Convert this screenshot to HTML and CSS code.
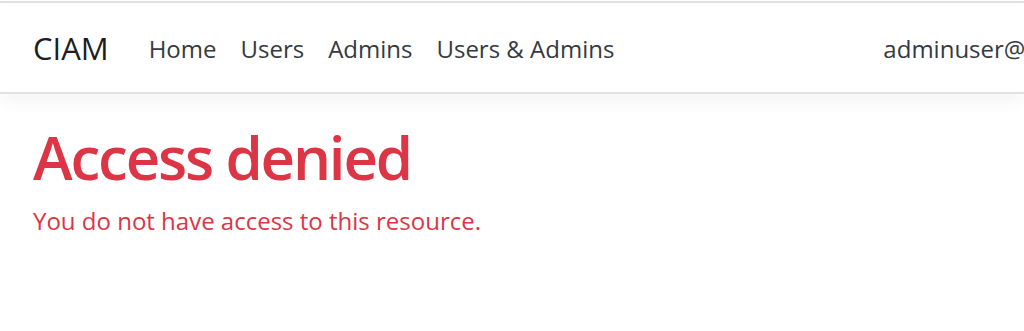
FILE: index.html
```html
<!DOCTYPE html>
<html lang="en">
<head>
    <meta charset="UTF-8">
    <meta name="viewport" content="width=device-width, initial-scale=1.0">
    <title>Access denied - CIAM</title>
    <link rel="stylesheet" href="styles.css">
</head>
<body>
    <header class="topbar">
        <nav class="navbar">
            <div class="navbar-inner">
                <a class="brand" href="#">CIAM</a>
                <ul class="nav-links">
                    <li><a href="#">Home</a></li>
                    <li><a href="#">Users</a></li>
                    <li><a href="#">Admins</a></li>
                    <li><a href="#">Users &amp; Admins</a></li>
                </ul>
                <ul class="nav-links nav-user">
                    <li><a href="#">adminuser@example.com</a></li>
                    <li><a href="#">Logout</a></li>
                </ul>
            </div>
        </nav>
    </header>

    <main class="container">
        <h1 class="text-danger">Access denied</h1>
        <p class="text-danger">You do not have access to this resource.</p>
    </main>
</body>
</html>
```

FILE: styles.css
```css
html, body {
    margin: 0;
    padding: 0;
}
body {
    font-family: "Open Sans", "Noto Sans", Arial, sans-serif;
    font-size: 24px;
    line-height: 1.5;
    color: #212529;
    background-color: #fff;
    overflow-x: hidden;
}
a {
    text-decoration: none;
}
.topbar {
    border-top: 2px solid #e2e2e2;
    margin-top: 1px;
}
.navbar {
    background-color: #fff;
    border-bottom: 2px solid #dee2e6;
    box-shadow: 0 6px 18px rgba(0, 0, 0, 0.05);
    overflow: hidden;
    height: 89px;
    margin-bottom: 27px;
}
.navbar-inner {
    display: flex;
    align-items: center;
    height: 100%;
    padding: 2px 22px 0 33px;
    box-sizing: border-box;
}
.brand {
    font-size: 31px;
    color: rgba(0, 0, 0, 0.9);
    margin-right: 28px;
    white-space: nowrap;
}
.nav-links {
    display: flex;
    list-style: none;
    margin: 0;
    padding: 0;
    flex-shrink: 0;
}
.nav-links a {
    display: block;
    padding: 0 12px;
    color: #343a40;
    white-space: nowrap;
}
.nav-links li:last-child a {
    padding-right: 14px;
}
.nav-user {
    margin-left: 243px;
}
.container {
    padding: 0 33px;
}
h1 {
    font-size: 60px;
    font-weight: 600;
    letter-spacing: -2.2px;
    line-height: 1.2;
    margin: 0 0 10px;
}
p {
    margin: 0 0 24px;
}
.text-danger {
    color: #dc3545;
}
```
